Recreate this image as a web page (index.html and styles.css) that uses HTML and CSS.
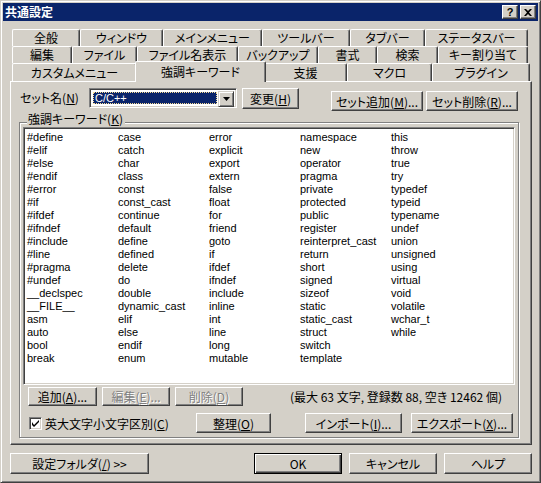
FILE: index.html
```html
<!DOCTYPE html>
<html lang="ja">
<head>
<meta charset="utf-8">
<title>共通設定</title>
<link rel="stylesheet" href="styles.css">
</head>
<body>
<div class="window">
  <div class="titlebar">
    <span class="title">共通設定</span>
    <div class="tbtns">
      <span class="tbtn help">?</span>
      <span class="tbtn close"><svg width="8" height="7" viewBox="0 0 8 7"><path d="M0 0h2l2 2 2-2h2L5 3.5 8 7H6L4 5 2 7H0l3-3.5z" fill="#000"/></svg></span>
    </div>
  </div>

  <div class="tabs">
    <div class="tabrow r1">
      <div class="tab">全般</div>
      <div class="tab">ウィンドウ</div>
      <div class="tab">メインメニュー</div>
      <div class="tab">ツールバー</div>
      <div class="tab">タブバー</div>
      <div class="tab">ステータスバー</div>
    </div>
    <div class="tabrow r2">
      <div class="tab">編集</div>
      <div class="tab">ファイル</div>
      <div class="tab">ファイル名表示</div>
      <div class="tab">バックアップ</div>
      <div class="tab">書式</div>
      <div class="tab">検索</div>
      <div class="tab">キー割り当て</div>
    </div>
    <div class="tabrow r3">
      <div class="tab">カスタムメニュー</div>
      <div class="tab sel">強調キーワード</div>
      <div class="tab">支援</div>
      <div class="tab">マクロ</div>
      <div class="tab">プラグイン</div>
    </div>
  </div>

  <div class="panel">
    <div class="setrow">
      <span class="setlabel">セット名(<u>N</u>)</span>
      <div class="combo">
        <span class="combo-sel">C/C++</span>
        <span class="combo-arrow"><svg width="7" height="4" viewBox="0 0 7 4"><path d="M0 0h7L3.5 4z" fill="#000"/></svg></span>
      </div>
      <span class="btn b-change">変更(<u>H</u>)</span>
      <span class="btn b-setadd">セット追加(<u>M</u>)...</span>
      <span class="btn b-setdel">セット削除(<u>R</u>)...</span>
    </div>

    <div class="group">
      <span class="group-label">強調キーワード(<u>K</u>)</span>
      <div class="list">
        <span>#define</span><span>#elif</span><span>#else</span><span>#endif</span><span>#error</span><span>#if</span><span>#ifdef</span><span>#ifndef</span><span>#include</span><span>#line</span><span>#pragma</span><span>#undef</span><span>__declspec</span><span>__FILE__</span><span>asm</span><span>auto</span><span>bool</span><span>break</span>
        <span>case</span><span>catch</span><span>char</span><span>class</span><span>const</span><span>const_cast</span><span>continue</span><span>default</span><span>define</span><span>defined</span><span>delete</span><span>do</span><span>double</span><span>dynamic_cast</span><span>elif</span><span>else</span><span>endif</span><span>enum</span>
        <span>error</span><span>explicit</span><span>export</span><span>extern</span><span>false</span><span>float</span><span>for</span><span>friend</span><span>goto</span><span>if</span><span>ifdef</span><span>ifndef</span><span>include</span><span>inline</span><span>int</span><span>line</span><span>long</span><span>mutable</span>
        <span>namespace</span><span>new</span><span>operator</span><span>pragma</span><span>private</span><span>protected</span><span>public</span><span>register</span><span>reinterpret_cast</span><span>return</span><span>short</span><span>signed</span><span>sizeof</span><span>static</span><span>static_cast</span><span>struct</span><span>switch</span><span>template</span>
        <span>this</span><span>throw</span><span>true</span><span>try</span><span>typedef</span><span>typeid</span><span>typename</span><span>undef</span><span>union</span><span>unsigned</span><span>using</span><span>virtual</span><span>void</span><span>volatile</span><span>wchar_t</span><span>while</span>
      </div>
      <div class="listbtns">
        <span class="btn b-add">追加(<u>A</u>)...</span>
        <span class="btn b-edit disabled">編集(<u>E</u>)...</span>
        <span class="btn b-del disabled">削除(<u>D</u>)</span>
        <span class="status">(最大 63 文字, 登録数 88, 空き 12462 個)</span>
      </div>
      <div class="optrow">
        <label class="check">
          <span class="checkbox"><svg width="7" height="7" viewBox="0 0 7 7"><path d="M0 2v3l2 2 5-5V0L2 5z" fill="#000"/></svg></span>
          <span>英大文字小文字区別(<u>C</u>)</span>
        </label>
        <span class="btn b-sort">整理(<u>O</u>)</span>
        <span class="btn b-import">インポート(<u>I</u>)...</span>
        <span class="btn b-export">エクスポート(<u>X</u>)...</span>
      </div>
    </div>
  </div>

  <div class="footer">
    <span class="btn b-folder">設定フォルダ(<u>/</u>) &gt;&gt;</span>
    <span class="btn b-ok default">OK</span>
    <span class="btn b-cancel">キャンセル</span>
    <span class="btn b-help">ヘルプ</span>
  </div>
</div>
</body>
</html>
```

FILE: styles.css
```css
* { box-sizing: border-box; }
html, body { margin: 0; padding: 0; }
body {
  width: 541px;
  height: 483px;
  overflow: hidden;
  background: #D4D0C8;
  font-family: "Noto Sans CJK JP", "Noto Sans", sans-serif;
  font-size: 12px;
  line-height: 13px;
  color: #000;
  font-feature-settings: "palt" 1;
}
u { text-decoration: underline; text-underline-offset: 1px; }

.window {
  width: 541px;
  height: 483px;
  background: #D4D0C8;
  border: 1px solid;
  border-color: #D4D0C8 #404040 #404040 #D4D0C8;
  box-shadow: inset 1px 1px #fff, inset -1px -1px #808080;
  padding: 2px;
  display: flex;
  flex-direction: column;
}

/* title bar */
.titlebar {
  height: 18px;
  background: #0A246A;
  color: #fff;
  display: flex;
  align-items: center;
  padding: 0 2px 0 2px;
}
.title { font-weight: bold; font-size: 12px; line-height: 18px; }
.tbtns { margin-left: auto; display: flex; gap: 2px; }
.tbtn {
  width: 16px;
  height: 14px;
  background: #D4D0C8;
  border: 1px solid;
  border-color: #fff #404040 #404040 #fff;
  box-shadow: inset -1px -1px #808080;
  color: #000;
  display: flex;
  align-items: center;
  justify-content: center;
  font-family: "Liberation Sans", sans-serif;
  font-weight: bold;
  font-size: 11px;
  line-height: 12px;
}

/* tabs */
.tabs { margin-top: 8px; padding-left: 9px; display: flex; flex-direction: column; }
.tabrow { display: flex; height: 17px; }
.tabrow.r3 { height: 18px; }
.tab {
  flex: none;
  height: 17px;
  background: #D4D0C8;
  border-top: 1px solid #fff;
  border-left: 1px solid #fff;
  border-right: 1px solid #404040;
  box-shadow: inset -1px 0 #808080;
  border-radius: 2px 2px 0 0;
  text-align: center;
  line-height: 16px;
  white-space: nowrap;
}
.r3 .tab { height: 18px; line-height: 17px; }
.r1 .tab:nth-child(1) { width: 68px; }
.r1 .tab:nth-child(2) { width: 83px; }
.r1 .tab:nth-child(3) { width: 99px; }
.r1 .tab:nth-child(4) { width: 88px; }
.r1 .tab:nth-child(5) { width: 75px; }
.r1 .tab:nth-child(6) { width: 103px; }
.r2 .tab:nth-child(1) { width: 60px; }
.r2 .tab:nth-child(2) { width: 65px; }
.r2 .tab:nth-child(3) { width: 101px; }
.r2 .tab:nth-child(4) { width: 80px; }
.r2 .tab:nth-child(5) { width: 59px; }
.r2 .tab:nth-child(6) { width: 61px; }
.r2 .tab:nth-child(7) { width: 90px; }
.r3 .tab:nth-child(1) { width: 125px; }
.r3 .tab:nth-child(2) { width: 131px; }
.r3 .tab:nth-child(3) { width: 83px; }
.r3 .tab:nth-child(4) { width: 85px; }
.r3 .tab:nth-child(5) { width: 98px; }
.r3 .tab.sel {
  margin: -2px -2px 0;
  height: 21px;
  line-height: 19px;
  position: relative;
  z-index: 2;
}

/* panel */
.panel {
  margin-left: 7px;
  width: 522px;
  height: 364px;
  border: 1px solid;
  border-color: #fff #404040 #404040 #fff;
  box-shadow: inset -1px -1px #808080;
  padding: 6px 13px 0 8px;
  position: relative;
}

.setrow { display: flex; align-items: flex-start; height: 22px; }
.setlabel { width: 69px; margin-left: 1px; line-height: 20px; }
.combo {
  width: 148px;
  height: 20px;
  background: #fff;
  border: 1px solid;
  border-color: #808080 #fff #fff #808080;
  box-shadow: inset 1px 1px #404040, inset -1px -1px #D4D0C8;
  padding: 2px;
  display: flex;
}
.combo-sel {
  flex: 1;
  margin: 1px;
  background: #0A246A;
  color: #fff;
  outline: 1px dotted #F5DB95;
  outline-offset: -1px;
  font-family: "Liberation Sans", sans-serif;
  font-size: 11px;
  line-height: 12px;
  padding-left: 2px;
}
.combo-arrow {
  width: 16px;
  height: 16px;
  flex: none;
  background: #D4D0C8;
  border: 1px solid;
  border-color: #D4D0C8 #404040 #404040 #D4D0C8;
  box-shadow: inset 1px 1px #fff, inset -1px -1px #808080;
  display: flex;
  align-items: center;
  justify-content: center;
}

.btn {
  flex: none;
  background: #D4D0C8;
  border: 1px solid;
  border-color: #fff #404040 #404040 #fff;
  box-shadow: inset -1px -1px #808080;
  display: flex;
  align-items: center;
  justify-content: center;
  white-space: nowrap;
}
.btn.disabled { color: #808080; text-shadow: 1px 1px #fff; }
.btn.default {
  border-color: #000;
  box-shadow: inset 1px 1px #fff, inset -1px -1px #404040, inset -2px -2px #808080;
}

.b-change { margin-left: 5px; width: 57px; height: 21px; }
.b-setadd { margin-left: auto; margin-top: 3px; width: 92px; height: 20px; }
.b-setdel { margin-left: 3px; margin-top: 3px; width: 92px; height: 20px; }

/* group box */
.group {
  margin-top: 12px;
  width: 500px;
  height: 316px;
  border: 1px solid #808080;
  box-shadow: inset 1px 1px #fff, 1px 1px #fff;
  padding: 4px 0 0 3px;
  position: relative;
}
.group-label {
  position: absolute;
  top: -11px;
  left: 7px;
  padding: 0 2px 0 1px;
  background: #D4D0C8;
  line-height: 13px;
}

.list {
  width: 492px;
  height: 258px;
  background: #fff;
  border: 1px solid;
  border-color: #808080 #fff #fff #808080;
  box-shadow: inset 1px 1px #404040, inset -1px -1px #D4D0C8;
  padding: 3px 0 0 3px;
  display: grid;
  grid-auto-flow: column;
  grid-template-rows: repeat(18, 13px);
  grid-auto-columns: 91px;
  font-family: "Liberation Sans", sans-serif;
  font-size: 11px;
  line-height: 13px;
  white-space: nowrap;
}

.listbtns { display: flex; align-items: center; margin-top: 2px; height: 19px; }
.b-add { margin-left: 5px; width: 69px; height: 19px; }
.b-edit { margin-left: 5px; width: 68px; height: 19px; }
.b-del { margin-left: 5px; width: 68px; height: 19px; }
.status { margin-left: auto; margin-right: 16px; }

.optrow { display: flex; align-items: center; margin-top: 7px; height: 20px; }
.check { display: flex; align-items: center; width: 167px; margin-left: 6px; gap: 3px; }
.checkbox {
  width: 13px;
  height: 13px;
  flex: none;
  background: #fff;
  border: 1px solid;
  border-color: #808080 #fff #fff #808080;
  box-shadow: inset 1px 1px #404040, inset -1px -1px #D4D0C8;
  display: flex;
  align-items: center;
  justify-content: center;
}
.b-sort { width: 75px; height: 20px; }
.b-import { margin-left: 34px; width: 97px; height: 20px; }
.b-export { margin-left: 9px; width: 102px; height: 20px; }

/* footer */
.footer { display: flex; margin-top: 8px; padding-left: 7px; }
.footer .btn { height: 21px; }
.b-folder { width: 139px; }
.b-ok { margin-left: 105px; width: 88px; }
.b-cancel { margin-left: 7px; width: 88px; }
.b-help { margin-left: 7px; width: 88px; }
```
